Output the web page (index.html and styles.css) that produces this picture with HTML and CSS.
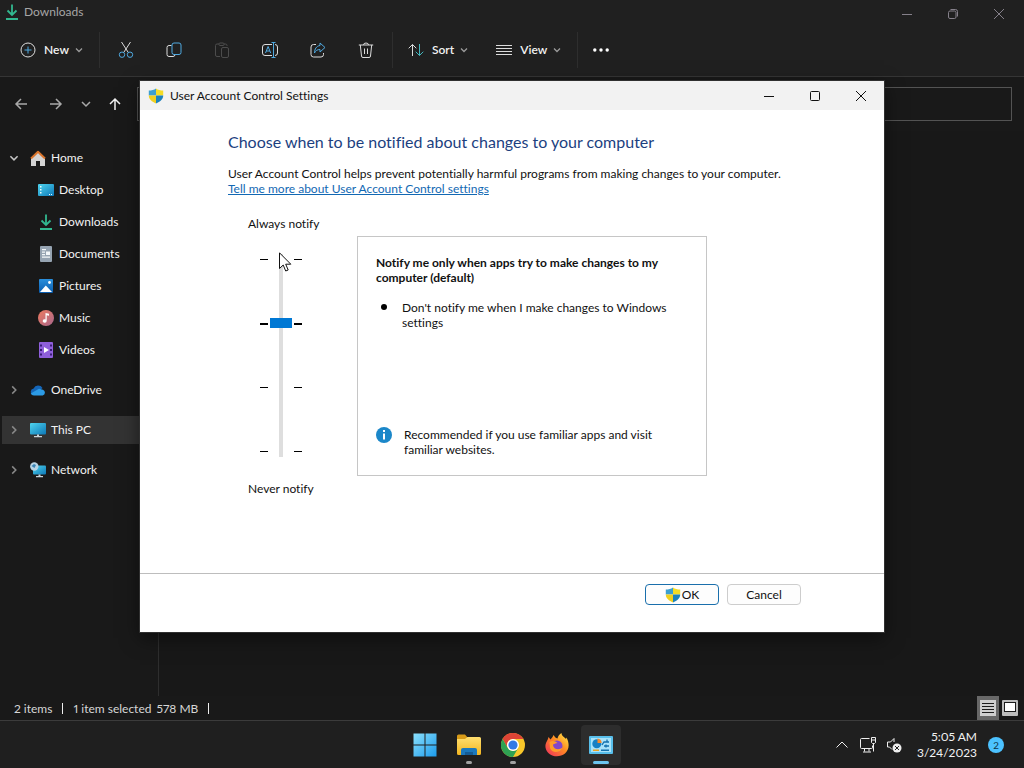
FILE: index.html
```html
<!DOCTYPE html>
<html lang="en">
<head>
<meta charset="utf-8">
<meta name="viewport" content="width=device-width, initial-scale=1">
<title>User Account Control Settings</title>
<link rel="stylesheet" href="styles.css">
</head>
<body>
<svg class="defs" aria-hidden="true">
  <defs>
    <linearGradient id="g-sky" x1="0" y1="0" x2="1" y2="1"><stop offset="0" stop-color="#4fd4ee"/><stop offset="1" stop-color="#0d78b8"/></linearGradient>
    <linearGradient id="g-pic" x1="0" y1="0" x2="0" y2="1"><stop offset="0" stop-color="#2a8fdc"/><stop offset="1" stop-color="#0a5cae"/></linearGradient>
    <linearGradient id="g-music" x1="0" y1="0" x2="1" y2="1"><stop offset="0" stop-color="#ee7a5e"/><stop offset="1" stop-color="#a8678c"/></linearGradient>
    <linearGradient id="g-win" x1="0" y1="0" x2="1" y2="1"><stop offset="0" stop-color="#8be0fc"/><stop offset="1" stop-color="#1c9bec"/></linearGradient>
    <linearGradient id="g-folder" x1="0" y1="0" x2="0" y2="1"><stop offset="0" stop-color="#ffdf70"/><stop offset="1" stop-color="#f2b51f"/></linearGradient>
    <linearGradient id="g-fox" x1="1" y1="0" x2="0" y2="1"><stop offset="0" stop-color="#fff04a"/><stop offset=".45" stop-color="#ff8a22"/><stop offset="1" stop-color="#ee2a62"/></linearGradient>
    <symbol id="shield" viewBox="0 0 16 16">
      <path fill="#3c9fd0" d="M8 .500C6 2 3.500 2.500 .800 2.500v5H8z"/>
      <path fill="#f4dc25" d="M8 .500c2 1.500 4.500 2 7.200 2v5H8z"/>
      <path fill="#f0d020" d="M.800 7.500H8V15.500C4 13.500 .800 11.500 .800 7.500z"/>
      <path fill="#1c82bc" d="M15.200 7.500H8v8c4-2 7.200-4 7.200-8z"/>
    </symbol>
    <symbol id="download" viewBox="0 0 16 16"><path fill="none" stroke="#32b890" stroke-width="1.800" d="M8 .500v10.500M3.500 6.500L8 11 12.500 6.500M2 15h12"/></symbol>
    <symbol id="chev" viewBox="0 0 10 10"><path fill="none" stroke="currentColor" stroke-width="1.300" d="M2 3.500l3 3 3-3"/></symbol>
  </defs>
</svg>

<div class="desktop">
  <section class="explorer" aria-label="Downloads">
    <header class="titlebar">
      <svg class="i16"><use href="#download"/></svg>
      <span class="title-text">Downloads</span>
      <div class="caption">
        <button aria-label="Minimize"><svg viewBox="0 0 12 12"><path d="M1 6.500h10"/></svg></button>
        <button aria-label="Restore"><svg viewBox="0 0 12 12"><rect x="1.500" y="3" width="7.500" height="7.500" rx="1.500"/><path d="M3.500 1.500h5a2 2 0 0 1 2 2v5"/></svg></button>
        <button aria-label="Close"><svg viewBox="0 0 12 12"><path d="M1 1l10 10M11 1L1 11"/></svg></button>
      </div>
    </header>

    <div class="toolbar" role="toolbar">
      <button class="tool tool-new">
        <svg viewBox="0 0 16 16"><circle cx="8" cy="8" r="7"/><path class="blue" d="M8 4.500v7M4.500 8h7"/></svg>
        New <svg class="chev"><use href="#chev"/></svg>
      </button>
      <span class="sep"></span>
      <div class="icon-tools">
        <button class="tool" aria-label="Cut"><svg viewBox="0 0 16 16"><path d="M3.500 0l6.800 10.500M12.500 0L5.700 10.500"/><circle class="blue" cx="4" cy="12.700" r="2.700"/><circle class="blue" cx="12" cy="12.700" r="2.700"/></svg></button>
        <button class="tool" aria-label="Copy"><svg viewBox="0 0 16 16"><path d="M5.500 3.500H3a2 2 0 0 0-2 2v7a2 2 0 0 0 2 2h4a2 2 0 0 0 2-2"/><rect class="blue" x="6" y="1" width="9" height="11.500" rx="2"/></svg></button>
        <button class="tool faded" aria-label="Paste" disabled><svg viewBox="0 0 16 16"><path d="M6 14.500H3a1.500 1.500 0 0 1-1.500-1.500V3.500A1.500 1.500 0 0 1 3 2h2m5 0h1.500A1.500 1.500 0 0 1 13 3.500V4"/><rect x="5" y="1" width="5" height="2.500" rx="1"/><rect x="7.500" y="5.500" width="7" height="10" rx="1.500"/></svg></button>
        <button class="tool" aria-label="Rename"><svg class="wide" viewBox="0 0 18 16"><path d="M11 2.500H4a2.500 2.500 0 0 0-2.500 2.500v6A2.500 2.500 0 0 0 4 13.500h7M14 2.500a2.500 2.500 0 0 1 2.500 2.500v6a2.500 2.500 0 0 1-2.500 2.500"/><path class="blue" d="M12.500 1v14M10.500.500h4M10.500 15.500h4M4.500 11l2.600-6.500L9.700 11M5.300 9h3.600"/></svg></button>
        <button class="tool" aria-label="Share"><svg viewBox="0 0 16 16"><path d="M6 2.500H3.500A2.500 2.500 0 0 0 1 5v7.500A2.500 2.500 0 0 0 3.500 15H11a2.500 2.500 0 0 0 2.500-2.500V11"/><path class="blue" d="M10 1l5 4.500-5 4.500V7.500C7.500 7.500 5.500 8.500 4.500 11c0-4 2-7 5.500-7.500z"/></svg></button>
        <button class="tool" aria-label="Delete"><svg viewBox="0 0 16 16"><path d="M.800 3h14.400M5.500 3a2.500 2 0 0 1 5 0M2.300 3l1.200 11a1.500 1.500 0 0 0 1.500 1.500h6a1.500 1.500 0 0 0 1.500-1.500l1.200-11M6.500 6.500v5.500M9.500 6.500v5.500"/></svg></button>
      </div>
      <span class="sep"></span>
      <button class="tool tool-sort">
        <svg viewBox="0 0 16 16"><path d="M4.500 14V2.500M.700 6.300l3.800-3.800 3.800 3.800"/><path class="teal" d="M11.500 2v11.500M7.700 9.700l3.800 3.800 3.800-3.800"/></svg>
        Sort <svg class="chev"><use href="#chev"/></svg>
      </button>
      <button class="tool">
        <svg viewBox="0 0 16 16"><path d="M0 3.500h16M0 6.500h16M0 9.500h16M0 12.500h16"/></svg>
        View <svg class="chev"><use href="#chev"/></svg>
      </button>
      <span class="sep"></span>
      <button class="tool more" aria-label="More"><svg viewBox="0 0 16 16"><g class="dots"><circle cx="1.800" cy="8" r="1.700"/><circle cx="8" cy="8" r="1.700"/><circle cx="14.200" cy="8" r="1.700"/></g></svg></button>
    </div>

    <div class="navbar">
      <button aria-label="Back"><svg viewBox="0 0 14 14"><path d="M13 7H2M7 2L2 7l5 5"/></svg></button>
      <button class="forward" aria-label="Forward"><svg viewBox="0 0 14 14"><path d="M1 7h11M7 2l5 5-5 5"/></svg></button>
      <button class="recent" aria-label="Recent locations"><svg viewBox="0 0 14 14"><path d="M3 5l4 4 4-4"/></svg></button>
      <button class="up" aria-label="Up"><svg viewBox="0 0 14 14"><path d="M7 13V2M2 7l5-5 5 5"/></svg></button>
      <input class="address" type="text" aria-label="Address">
    </div>

    <div class="panes">
      <nav class="tree" aria-label="Folders">
        <ul>
          <li><a href="#home"><svg class="arrow open"><use href="#chev"/></svg>
            <svg class="i16" viewBox="0 0 16 16"><path fill="#d4d4d4" d="M1 8l7-6 7 6v8h-5v-5H6v5H1z"/><path fill="none" stroke="#d9742c" stroke-width="2" stroke-linejoin="round" d="M1 8.500L8 1.800l7 6.700"/></svg>Home</a>
            <ul class="children">
              <li><a href="#desktop"><svg class="i16" viewBox="0 0 16 16"><rect y="2" width="16" height="12" rx="1" fill="url(#g-sky)"/><path fill="#eafaff" d="M2 4h1.500v1.500H2zM2 7h1.500v1.500H2zM2 10h1.500v1.500H2zM11 12h1v1h-1zM13 12h1v1h-1z"/></svg>Desktop</a></li>
              <li><a href="#downloads"><svg class="i16"><use href="#download"/></svg>Downloads</a></li>
              <li><a href="#documents"><svg class="i16" viewBox="0 0 16 16"><rect x="2" width="12" height="16" rx="1" fill="#96a4b2"/><path fill="#f3f7fa" d="M4 3h4v1.300H4zM4 5.500h3v1.300H4zM8 5.500h4V9H8zM4 8h3v1.300H4zM4 10.500h8v1.300H4z"/></svg>Documents</a></li>
              <li><a href="#pictures"><svg class="i16" viewBox="0 0 16 16"><rect x="1" y="1" width="14" height="14" rx="1" fill="url(#g-pic)"/><path fill="#fff" d="M2 14l5.800-6.500L14 14z"/><circle cx="11.500" cy="4.500" r="1.400" fill="#fff"/></svg>Pictures</a></li>
              <li><a href="#music"><svg class="i16" viewBox="0 0 16 16"><circle cx="8" cy="8" r="8" fill="url(#g-music)"/><path fill="#fff" d="M7.500 3l3.500.800v2L8.700 5.300V11a2 1.700 0 1 1-1.200-1.600z"/></svg>Music</a></li>
              <li><a href="#videos"><svg class="i16" viewBox="0 0 16 16"><rect x="1" width="14" height="16" rx="1" fill="#8f5fdb"/><path fill="#3a1c77" d="M2 2.500h2v2H2zM2 7h2v2H2zM2 11.500h2v2H2zM12 2.500h2v2h-2zM12 7h2v2h-2zM12 11.500h2v2h-2z"/><path fill="#fff" d="M6 5l5 3-5 3z"/></svg>Videos</a></li>
            </ul>
          </li>
          <li><a href="#onedrive"><svg class="arrow"><use href="#chev"/></svg><svg class="i16" viewBox="0 0 16 16"><path fill="#1566b8" d="M1 11a3.600 3.600 0 0 1 2.600-4.500A5 5 0 0 1 12.500 6L5 13z"/><path fill="#2c9be6" d="M4 13.500a3.500 3.500 0 0 1-3.300-2L9 6.800l4 1a3 3 0 0 1-.300 5.700z"/></svg>OneDrive</a></li>
          <li><a href="#pc" class="current"><svg class="arrow"><use href="#chev"/></svg><svg class="i16" viewBox="0 0 16 16"><rect y="1" width="16" height="11.500" rx="1" fill="url(#g-sky)"/><path fill="#c9d4da" d="M7 12.500h2v1.500h3v1.300H4V14h3z"/></svg>This PC</a></li>
          <li><a href="#network"><svg class="arrow"><use href="#chev"/></svg><svg class="i16" viewBox="0 0 16 16"><rect x="3" y="3.500" width="13" height="9" rx="1" fill="url(#g-sky)"/><path fill="#c9d4da" d="M8.500 12.500h2v1.500H13v1.300H6V14h2.500z"/><circle cx="4.300" cy="4.500" r="4.200" fill="#b8d4e4"/><path d="M1.500 4l2.500-2 2 1-1.500 3z" fill="#3a84b4"/></svg>Network</a></li>
        </ul>
      </nav>
      <div class="content"></div>
    </div>

    <footer class="status">
      <span>2 items</span><i></i><span>1 item selected</span><span class="size">578 MB</span><i></i>
      <div class="views">
        <button class="on" aria-label="Details view"><svg viewBox="0 0 16 16"><rect width="16" height="16" fill="#cfcfcf"/><path stroke="#1c1c1c" d="M2 3.500h12M2 6.500h12M2 9.500h12M2 12.500h12"/></svg></button>
        <button aria-label="Large thumbnails"><svg viewBox="0 0 16 16"><rect width="16" height="16" rx="1" fill="#bdbdbd"/><rect x="2.500" y="2.500" width="11" height="9" fill="#fff" stroke="#1a1a1a"/></svg></button>
      </div>
    </footer>
  </section>

  <footer class="taskbar">
    <div class="apps">
      <button aria-label="Start"><svg viewBox="0 0 24 24"><path fill="url(#g-win)" d="M.500 .500h11v11H.500zM12.500 .500h11v11h-11zM.500 12.500h11v11H.500zM12.500 12.500h11v11h-11z"/></svg></button>
      <button class="running" aria-label="File Explorer"><svg viewBox="0 0 24 24"><path fill="#d89b18" d="M0 3a1.500 1.500 0 0 1 1.500-1.500H8L11 5v5H0z"/><path fill="url(#g-folder)" d="M0 6h8l2.500-2H22.500A1.500 1.500 0 0 1 24 5.500v15a1.500 1.500 0 0 1-1.500 1.500h-21A1.500 1.500 0 0 1 0 20.500z"/><path fill="#1b78bd" d="M4 22v-5a2 2 0 0 1 2-2h12a2 2 0 0 1 2 2v5z"/><path fill="#155b94" d="M8 19h8v3H8z"/></svg></button>
      <button class="running" aria-label="Chrome"><svg viewBox="0 0 24 24"><circle cx="12" cy="12" r="12" fill="#f8c72a"/><path fill="#dd4436" d="M1.600 6A12 12 0 0 1 22.400 6H12a6 6 0 0 0-5.200 9z"/><path fill="#2fa253" d="M1.600 6A12 12 0 0 0 12 24l5.200-9A6 6 0 0 1 6.800 15z"/><circle cx="12" cy="12" r="6" fill="#fff"/><circle cx="12" cy="12" r="4.600" fill="#3379e4"/></svg></button>
      <button aria-label="Firefox"><svg viewBox="0 0 24 24"><path fill="url(#g-fox)" d="M3.500 4C4.500 5 5 6 5.500 6.500 6.500 5 8 4 8.500 2c1 1.500 2 3 4 3.500C13 3 14.500 1 16.500 0c0 3 3 4 4.500 6l.500-1.500C25 11 24 17 20 20.500 13 26 2 23 .500 14.500 0 10 2.500 8.500 3.500 4z"/><circle cx="12" cy="13" r="5.500" fill="#8447c9"/><path fill="#ff9d2a" d="M4.500 9c3-2 6-1 8 1-2 0-2.500 1-4.500 1.500 0 5 6 6 9.500 3C16 20 7 21 5 15z"/></svg></button>
      <button class="active" aria-label="Control Panel"><svg viewBox="0 0 24 24"><rect y="3" width="24" height="18" rx="1" fill="#58bfeb"/><rect x="2" y="5" width="20" height="14" fill="#a9e3fa"/><circle cx="7.800" cy="10.800" r="4.500" fill="#1680c4"/><path fill="#f58a2c" d="M8.500 5.500A4.700 4.700 0 0 1 12.700 10H8.500z"/><path fill="none" stroke="#1471ad" stroke-width="1.300" d="M13 12l2-3h5M15 13h5M18 6.500v2M17 11.500v3"/><path fill="#e8a326" d="M4 16.500h6V18H4z"/><path fill="#1471ad" d="M12 16.500h8V18h-8z"/></svg></button>
    </div>
    <div class="tray">
      <button aria-label="Show hidden icons"><svg viewBox="0 0 16 16"><path d="M2.500 10.500L8 5l5.500 5.500"/></svg></button>
      <button aria-label="Network"><svg viewBox="0 0 16 16"><path d="M9.500 1.500H1.500A1 1 0 0 0 .500 2.500v8a1 1 0 0 0 1 1h10a1 1 0 0 0 1-1V8.500M4.500 11.500v3M9 11.500v3M3 15h8M11.500.500h4v5l-1 1h-2l-1-1zM11.500 3h4M13.500 6.500v8"/></svg></button>
      <button aria-label="Volume muted"><svg viewBox="0 0 16 16"><path d="M8 5V1.500L4.500 5H1.500v5h2L6 12.500"/><circle cx="11" cy="11" r="4.500" class="fill"/><path class="cut" d="M9 9l4 4M13 9l-4 4"/></svg></button>
      <time class="clock" datetime="2023-03-24T05:05">5:05 AM<br>3/24/2023</time>
      <span class="badge">2</span>
    </div>
  </footer>

  <section class="dialog" role="dialog" aria-labelledby="dlg-title">
    <header class="dialog-title">
      <svg class="i16"><use href="#shield"/></svg>
      <span id="dlg-title">User Account Control Settings</span>
      <div class="caption">
        <button aria-label="Minimize"><svg viewBox="0 0 12 12"><path d="M1 6.500h10"/></svg></button>
        <button aria-label="Maximize"><svg viewBox="0 0 12 12"><rect x="1.500" y="1.500" width="9" height="9" rx="1"/></svg></button>
        <button aria-label="Close"><svg viewBox="0 0 12 12"><path d="M1 1l10 10M11 1L1 11"/></svg></button>
      </div>
    </header>
    <div class="dialog-body">
      <h1>Choose when to be notified about changes to your computer</h1>
      <p>User Account Control helps prevent potentially harmful programs from making changes to your computer.</p>
      <a class="more-link" href="#more">Tell me more about User Account Control settings</a>
      <div class="settings">
        <div class="level">
          <label for="level">Always notify</label>
          <div class="scale">
            <div class="ticks"><i></i><i class="on"></i><i></i><i></i></div>
            <input id="level" type="range" min="0" max="3" value="2">
            <div class="ticks"><i></i><i class="on"></i><i></i><i></i></div>
            <svg class="pointer" viewBox="0 0 13 20"><path fill="#fff" stroke="#111" d="M.500.800v15.700l3.700-3.500 2.500 6 2.500-1-2.500-5.800h5.100z"/></svg>
          </div>
          <span>Never notify</span>
        </div>
        <div class="panel">
          <h2>Notify me only when apps try to make changes to my computer (default)</h2>
          <ul><li>Don't notify me when I make changes to Windows settings</li></ul>
          <div class="advice">
            <svg class="i16" viewBox="0 0 16 16"><circle cx="8" cy="8" r="8" fill="#1b87c9"/><path fill="#fff" d="M7 3h2v2H7zM7 6.500h2v6H7z"/></svg>
            <p>Recommended if you use familiar apps and visit familiar websites.</p>
          </div>
        </div>
      </div>
    </div>
    <footer class="dialog-actions">
      <button class="ok"><svg class="i16"><use href="#shield"/></svg>OK</button>
      <button>Cancel</button>
    </footer>
  </section>
</div>
</body>
</html>
```

FILE: styles.css
```css
* { box-sizing: border-box; }
body, h1, h2, p, ul { margin: 0; padding: 0; }
ul { list-style: none; }
body {
  background: #191919;
  color: #f2f2f2;
  font: 12px/15px Lato, "Open Sans", sans-serif;
  font-variant-ligatures: none;
  font-variant-numeric: proportional-nums;
}
button {
  display: flex;
  align-items: center;
  justify-content: center;
  margin: 0;
  padding: 0;
  border: 0;
  background: none;
  color: inherit;
  font: inherit;
}
a { color: inherit; text-decoration: none; }
svg { display: block; flex: none; }
.defs { position: absolute; width: 0; height: 0; }
.i16 { width: 16px; height: 16px; }

.desktop {
  position: relative;
  display: flex;
  flex-direction: column;
  min-height: 100vh;
}
.explorer { flex: 1; display: flex; flex-direction: column; }

/* Window captions */
.titlebar {
  display: flex;
  align-items: center;
  gap: 4px;
  height: 27px;
  padding: 0 2px 4px 4px;
  background: #202020;
  color: #a6a6a6;
}
.caption { display: flex; align-self: stretch; margin-left: auto; }
.caption button { width: 46px; }
.caption svg { width: 12px; height: 12px; fill: none; stroke: currentColor; }
.titlebar .caption { padding-top: 5px; color: #85808a; }

/* Command bar */
.toolbar {
  display: flex;
  align-items: center;
  height: 50px;
  padding: 0 20px 4px;
  border-bottom: 1px solid #353535;
  background: #202020;
}
.tool { gap: 8px; font-weight: 600; }
.tool svg { width: 16px; height: 16px; fill: none; stroke: #dcdcdc; }
.tool svg.wide { width: 18px; }
.tool svg.chev { width: 10px; height: 10px; margin-left: -3px; color: #9b9b9b; stroke: none; }
.tool .blue { stroke: #4fa9e0; }
.tool .teal { stroke: #43b6bd; }
.tool .dots { fill: #fff; stroke: none; }
.tool.faded svg { stroke: #4c4c4c; }
.tool-new { width: 64px; }
.sep { width: 1px; height: 36px; margin: 0 15px; background: #2e2e2e; }
.icon-tools { display: flex; }
.icon-tools .tool { width: 48px; }
.toolbar .icon-tools { margin: 0 -13px; }
.tool-sort { margin-right: 27px; }

/* Address row */
.navbar {
  display: flex;
  align-items: center;
  height: 54px;
  padding: 0 12px 0 14px;
}
.navbar button { width: 14px; height: 28px; margin-right: 21px; }
.navbar button svg { width: 14px; height: 14px; fill: none; stroke: #a9a9a9; stroke-width: 1.5; }
.navbar .forward { margin-right: 16px; }
.navbar .recent,
.navbar .up { margin-right: 15px; }
.navbar .up svg { stroke: #f2f2f2; }
.address {
  flex: 1;
  min-width: 0;
  height: 34px;
  padding: 0 8px;
  border: 1px solid #535353;
  background: #191919;
  color: inherit;
  font: inherit;
}

/* Folder tree */
.panes { flex: 1; display: flex; }
.tree {
  flex: none;
  width: 159px;
  padding: 13px 1px 0 2px;
  border-right: 1px solid #2e2e2e;
}
.tree > ul { display: flex; flex-direction: column; gap: 12px; }
.tree a {
  display: flex;
  align-items: center;
  gap: 5px;
  height: 28px;
  padding: 0 0 1px 6px;
}
.tree .current { background: #333; }
.arrow { width: 12px; height: 12px; margin-right: 5px; color: #888; transform: rotate(-90deg); }
.arrow.open { color: #c4c4c4; transform: none; }
.children { display: flex; flex-direction: column; gap: 4px; padding-top: 4px; }
.children a { padding-left: 36px; }
.content { flex: 1; background: #181818; }

/* Status bar */
.status {
  display: flex;
  align-items: center;
  height: 24px;
  padding: 0 6px 0 14px;
  color: #d6d6d6;
}
.status i { width: 1px; height: 11px; margin: 0 10px; background: #eee; }
.status .size { margin-left: 5px; }
.views { display: flex; gap: 3px; margin-left: auto; }
.views button { width: 16px; height: 24px; }
.views .on { width: 22px; background: #686868; }
.views svg { width: 16px; height: 16px; }

/* Taskbar */
.taskbar {
  display: grid;
  grid-template-columns: 1fr auto 1fr;
  align-items: center;
  height: 48px;
  padding: 0 20px;
  border-top: 1px solid #3b3b3b;
  background: #1f1f1f;
}
.apps { grid-column: 2; display: flex; gap: 4px; padding-left: 1px; }
.apps button { position: relative; width: 40px; height: 40px; border-radius: 4px; }
.apps svg { width: 24px; height: 24px; }
.apps .active { background: #2d2d2d; }
.apps .running::after,
.apps .active::after {
  content: "";
  position: absolute;
  bottom: 1px;
  left: 17px;
  width: 6px;
  height: 3px;
  border-radius: 2px;
  background: #a2a2a2;
}
.apps .active::after { left: 12px; width: 16px; background: #6bc4ef; }
.tray { display: flex; align-items: center; justify-content: flex-end; gap: 10px; }
.tray button svg { width: 16px; height: 16px; fill: none; stroke: #eee; }
.tray button .fill { fill: #eee; stroke: none; }
.tray button .cut { stroke: #222; }
.clock { margin: 0 2px 0 5px; line-height: 16px; text-align: right; white-space: nowrap; }
.badge {
  width: 16px;
  height: 16px;
  margin-left: -1px;
  border-radius: 8px;
  background: #4cc2ff;
  color: #10354a;
  font-size: 10px;
  line-height: 16px;
  text-align: center;
}

/* Account control window */
.dialog {
  position: absolute;
  top: 81px;
  left: 0;
  right: 0;
  width: 744px;
  max-width: 100%;
  margin: 0 auto;
  background: #fff;
  color: #111;
  box-shadow: 0 0 0 1px #303030, 0 6px 18px rgba(0, 0, 0, .5);
}
.dialog-title {
  display: flex;
  align-items: center;
  gap: 6px;
  height: 29px;
  padding-left: 8px;
  background: #f2f2f2;
}
.dialog-body { padding: 20px 88px 77px; }
.dialog-body h1 {
  margin-bottom: 12px;
  color: #1c3f7f;
  font-size: 16px;
  font-weight: 400;
  line-height: 24px;
}
.more-link { display: block; width: fit-content; color: #1268b3; text-decoration: underline; }
.settings { display: flex; align-items: flex-start; margin-top: 20px; }
.level { flex: none; display: flex; flex-direction: column; width: 129px; padding-left: 20px; }
.scale {
  position: relative;
  display: grid;
  grid-template-columns: 8px 26px 8px;
  width: 42px;
  height: 203px;
  margin: 23px 0 24px 12px;
}
.ticks { display: flex; flex-direction: column; justify-content: space-between; padding: 5px 0; }
.ticks i { height: 1px; background: #000; }
.ticks .on { height: 2px; }
.scale input {
  appearance: none;
  writing-mode: vertical-lr;
  direction: rtl;
  width: 26px;
  height: 203px;
  margin: 0;
  background: linear-gradient(#dedede, #dedede) center / 4px 100% no-repeat;
}
.scale input::-webkit-slider-thumb {
  appearance: none;
  width: 22px;
  height: 10px;
  border: 0;
  border-radius: 0;
  background: #0078d4;
}
.pointer { position: absolute; top: -2px; left: 19px; width: 13px; height: 20px; }
.panel {
  flex: 0 1 350px;
  display: flex;
  flex-direction: column;
  min-height: 240px;
  margin-top: 20px;
  padding: 18px;
  border: 1px solid #c6c6c6;
}
.panel h2 { margin-bottom: 15px; font-size: 12px; font-weight: 700; line-height: 15px; }
.panel li { position: relative; padding: 0 12px 0 26px; }
.panel li::before {
  content: "";
  position: absolute;
  top: 4px;
  left: 5px;
  width: 6px;
  height: 6px;
  border-radius: 3px;
  background: #000;
}
.advice { display: flex; gap: 12px; margin-top: auto; padding-right: 16px; }
.dialog-actions {
  display: flex;
  justify-content: flex-end;
  gap: 8px;
  padding: 10px 83px 27px;
  border-top: 1px solid #bdbdbd;
}
.dialog-actions button {
  width: 74px;
  height: 21px;
  border: 1px solid #cdcdcd;
  border-radius: 4px;
  background: #fdfdfd;
}
.dialog-actions .ok { gap: 1px; border-color: #1a6fac; }
```
